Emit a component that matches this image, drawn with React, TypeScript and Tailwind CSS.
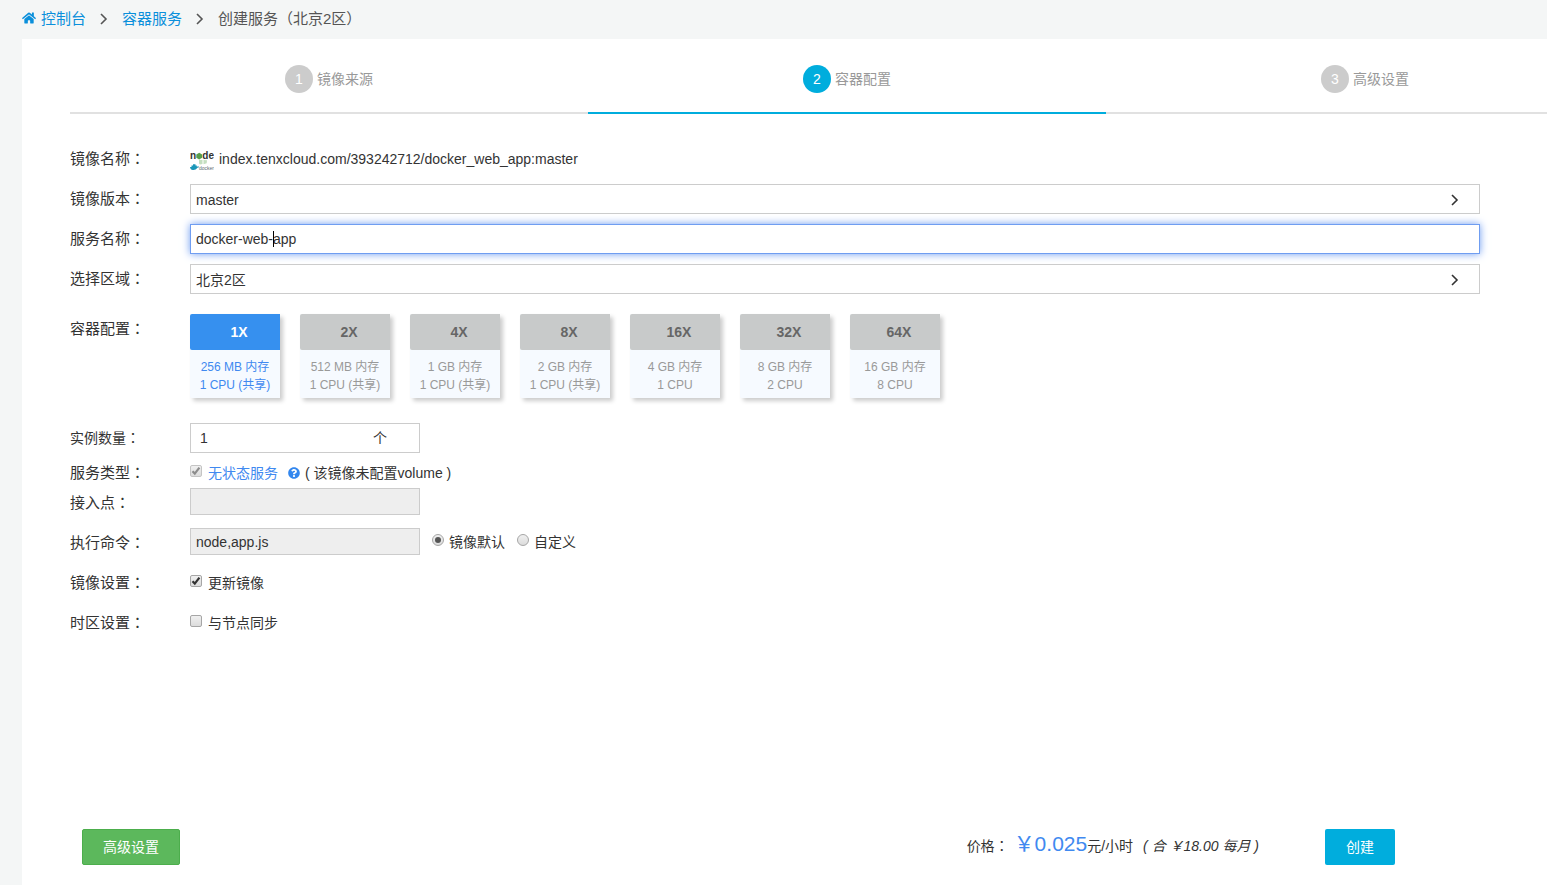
import { useState, type ReactNode } from "react";
import { FaHome, FaQuestionCircle } from "react-icons/fa";
import clsx from "clsx";

interface Plan {
  id: string;
  memory: string;
  cpu: string;
}

const plans: Plan[] = [
  { id: "1X", memory: "256 MB 内存", cpu: "1 CPU (共享)" },
  { id: "2X", memory: "512 MB 内存", cpu: "1 CPU (共享)" },
  { id: "4X", memory: "1 GB 内存", cpu: "1 CPU (共享)" },
  { id: "8X", memory: "2 GB 内存", cpu: "1 CPU (共享)" },
  { id: "16X", memory: "4 GB 内存", cpu: "1 CPU" },
  { id: "32X", memory: "8 GB 内存", cpu: "2 CPU" },
  { id: "64X", memory: "16 GB 内存", cpu: "8 CPU" },
];

const steps = ["镜像来源", "容器配置", "高级设置"];
const currentStep = 1;

function Chevron({ className }: { className?: string }) {
  return (
    <svg
      className={className}
      width="8"
      height="12"
      viewBox="0 0 8 12"
      fill="none"
      stroke="currentColor"
      strokeWidth="1.6"
      aria-hidden="true"
    >
      <path d="M1 1l5 5-5 5" />
    </svg>
  );
}

// Centred full-width colon
function Colon() {
  return <span className="font-['Noto_Sans_CJK_TC',sans-serif]">：</span>;
}

interface RowProps {
  label: string;
  htmlFor?: string;
  className?: string;
  small?: boolean;
  children: ReactNode;
}

function Row({ label, htmlFor, className = "h-10 items-center", small, children }: RowProps) {
  return (
    <div className={clsx("flex", className)}>
      <label
        htmlFor={htmlFor}
        className={clsx(
          "w-[120px] shrink-0 pb-[2px] leading-[28px]",
          small ? "text-sm" : "text-[15px]"
        )}
      >
        {label}
        <Colon />
      </label>
      {children}
    </div>
  );
}

interface SelectBoxProps {
  id: string;
  options: string[];
}

function SelectBox({ id, options }: SelectBoxProps) {
  return (
    <div className="relative flex-1">
      <select
        id={id}
        className="block h-[30px] w-full appearance-none border border-[#ccc] bg-white px-[5px] pt-[2px] text-sm outline-none"
      >
        {options.map((option) => (
          <option key={option}>{option}</option>
        ))}
      </select>
      <Chevron className="pointer-events-none absolute right-[21px] top-[10px]" />
    </div>
  );
}

interface TickProps {
  id: string;
  defaultChecked?: boolean;
  disabled?: boolean;
}

function Tick({ id, defaultChecked, disabled }: TickProps) {
  return (
    <span className="relative mb-1 block size-3">
      <input
        id={id}
        type="checkbox"
        defaultChecked={defaultChecked}
        disabled={disabled}
        className="peer block size-3 appearance-none rounded-[2px] border border-[#a6a6a6] bg-linear-to-b from-[#f0f0f0] to-[#dcdcdc] disabled:border-[#c4c4c4]"
      />
      <svg
        className="pointer-events-none absolute inset-0 hidden text-[#333] peer-checked:block peer-disabled:text-[#8c8c8c]"
        width="12"
        height="12"
        viewBox="0 0 12 12"
        fill="none"
        stroke="currentColor"
        strokeWidth="2.2"
        aria-hidden="true"
      >
        <path d="M2.5 6.2l2.3 2.4 4.6-6" />
      </svg>
    </span>
  );
}

interface RadioProps {
  id: string;
  defaultChecked?: boolean;
}

function Radio({ id, defaultChecked }: RadioProps) {
  return (
    <span className="relative mb-1 block size-3">
      <input
        id={id}
        type="radio"
        name="command-mode"
        defaultChecked={defaultChecked}
        className="peer block size-3 appearance-none rounded-full border border-[#a6a6a6] bg-linear-to-b from-[#f0f0f0] to-[#dcdcdc]"
      />
      <span className="pointer-events-none absolute left-[3px] top-[3px] hidden size-[6px] rounded-full bg-[#555] peer-checked:block" />
    </span>
  );
}

function ImageLogo() {
  return (
    <svg width="24" height="24" viewBox="0 0 24 24" aria-hidden="true">
      <g fontFamily="Liberation Sans, sans-serif">
        <text x="0" y="12" fontSize="10" fontWeight="bold" fill="#333">
          n
        </text>
        <text x="12.300" y="12" fontSize="10" fontWeight="bold" fill="#333">
          de
        </text>
        <text x="9" y="23" fontSize="5" fill="#5b6b73">
          docker
        </text>
      </g>
      <path d="M9.200 5.800l2.900 1.700v3.300l-2.900 1.700-2.900-1.700V7.500z" fill="#5a9e4b" />
      <path d="M9 13h3.500v4l-2.500.5-1-1zM13.500 13l3.500.3-.3 3-3.200.9z" fill="#c4dfc0" />
      <path
        d="M0 20h1.500v-1.400H3v-1.400h2.500v1.400h1.300v1.200c.8-.6 1.700-.4 2.400 0-.4.900-1.200 1-1.900 1-1 1.800-2.700 2.400-4.500 2.200C1 22.800.1 21.600 0 20z"
        fill="#1b96b8"
      />
    </svg>
  );
}

export default function App() {
  const [plan, setPlan] = useState("1X");
  const [serviceName, setServiceName] = useState("docker-web-app");

  return (
    <div className="flex min-h-screen flex-col overflow-x-hidden bg-[#f4f6f6] font-['Liberation_Sans','Noto_Sans_CJK_SC',sans-serif] text-sm text-[#333]">
      <nav className="flex h-[39px] items-center pb-[2px] pl-[22px] text-[15px] text-[#555]">
        <a href="#" className="flex items-center gap-[5px] text-[#0a8fdb]">
          <FaHome className="size-[14px]" />
          控制台
        </a>
        <Chevron className="mx-[14px]" />
        <a href="#" className="text-[#0a8fdb]">
          容器服务
        </a>
        <Chevron className="mx-[14px]" />
        <span>创建服务（北京2区）</span>
      </nav>

      <main className="ml-[22px] flex flex-1 flex-col overflow-hidden bg-white">
        {/* The step bar runs past the right edge of the panel */}
        <ol className="-mr-[77px] ml-12 grid grid-cols-3">
          {steps.map((step, index) => (
            <li
              key={step}
              className={clsx(
                "flex justify-center gap-1 border-b-2 pb-[19px] pt-[26px] leading-7 text-[#999]",
                index === currentStep ? "border-[#00addd]" : "border-[#e1e1e1]"
              )}
            >
              <span
                className={clsx(
                  "size-7 rounded-full text-center text-white",
                  index === currentStep ? "bg-[#00addd]" : "bg-[#ccc]"
                )}
              >
                {index + 1}
              </span>
              {step}
            </li>
          ))}
        </ol>

        <form className="flex flex-1 flex-col" onSubmit={(e) => e.preventDefault()}>
          <div className="pb-10 pl-12 pr-[67px] pt-[25px]">
            <Row label="镜像名称">
              <div className="flex items-center gap-[5px]">
                <ImageLogo />
                index.tenxcloud.com/393242712/docker_web_app:master
              </div>
            </Row>

            <Row label="镜像版本" htmlFor="version">
              <SelectBox id="version" options={["master"]} />
            </Row>

            <Row label="服务名称" htmlFor="service-name">
              <div className="relative flex-1">
                <input
                  id="service-name"
                  type="text"
                  value={serviceName}
                  onChange={(e) => setServiceName(e.target.value)}
                  className="block h-[30px] w-full border border-[#6f9df1] bg-white px-[5px] text-sm shadow-[0_0_8px_#6f9df1] outline-none"
                />
                <span className="pointer-events-none absolute left-[83px] top-[7px] h-4 w-px bg-black" />
              </div>
            </Row>

            <Row label="选择区域" htmlFor="region">
              <SelectBox id="region" options={["北京2区"]} />
            </Row>

            <Row label="容器配置" className="mb-[25px] mt-[15px] items-start">
              <div className="flex flex-wrap gap-5">
                {plans.map(({ id, memory, cpu }) => (
                  <button
                    key={id}
                    type="button"
                    onClick={() => setPlan(id)}
                    className="w-[90px] rounded-l-[2px] bg-[#f6faff] text-center shadow-[3px_3px_4px_#ccc]"
                  >
                    <span
                      className={clsx(
                        "block rounded-l-[2px] pl-2 text-sm font-bold leading-9",
                        plan === id ? "bg-[#3690ef] text-white" : "bg-[#c8caca] text-[#666]"
                      )}
                    >
                      {id}
                    </span>
                    <span
                      className={clsx(
                        "block h-12 pt-2 text-xs leading-[18px]",
                        plan === id ? "text-[#4089f0]" : "text-[#999]"
                      )}
                    >
                      {memory}
                      <br />
                      {cpu}
                    </span>
                  </button>
                ))}
              </div>
            </Row>

            <Row label="实例数量" htmlFor="count" small className="h-[30px] items-center">
              <div className="flex h-[30px] w-[230px] items-center border border-[#ccc]">
                <input
                  id="count"
                  type="text"
                  defaultValue="1"
                  className="w-[182px] pl-[9px] text-sm outline-none"
                />
                <span>个</span>
              </div>
            </Row>

            <Row label="服务类型" className="mt-[5px] h-[30px] items-center">
              <Tick id="stateless" defaultChecked disabled />
              <label htmlFor="stateless" className="ml-[6px] text-[#4089f0]">
                无状态服务
              </label>
              <FaQuestionCircle className="ml-[10px] mr-[5px] size-3 text-[#3387ee]" />
              <span>( 该镜像未配置volume )</span>
            </Row>

            <Row label="接入点" htmlFor="endpoint" className="mb-[5px] h-[30px] items-start">
              <input
                id="endpoint"
                type="text"
                disabled
                className="h-[27px] w-[230px] border border-[#ccc] bg-[#eee] px-[5px] text-sm"
              />
            </Row>

            <Row label="执行命令" htmlFor="command" className="h-10 items-start pt-[5px]">
              <div className="flex h-[27px] items-center">
                <input
                  id="command"
                  type="text"
                  readOnly
                  value="node,app.js"
                  className="mr-3 h-[27px] w-[230px] border border-[#ccc] bg-[#eee] px-[5px] text-sm outline-none"
                />
                <Radio id="command-default" defaultChecked />
                <label htmlFor="command-default" className="ml-[5px] mr-3">
                  镜像默认
                </label>
                <Radio id="command-custom" />
                <label htmlFor="command-custom" className="ml-[5px]">
                  自定义
                </label>
              </div>
            </Row>

            <Row label="镜像设置">
              <Tick id="update-image" defaultChecked />
              <label htmlFor="update-image" className="ml-[6px]">
                更新镜像
              </label>
            </Row>

            <Row label="时区设置">
              <Tick id="sync-timezone" />
              <label htmlFor="sync-timezone" className="ml-[6px]">
                与节点同步
              </label>
            </Row>
          </div>

          <div className="mt-auto flex items-center justify-between pb-5 pl-[60px] pr-[152px]">
            <button
              type="button"
              className="h-9 w-[98px] rounded-[2px] border border-[#4cae4c] bg-[#5cb85c] text-white"
            >
              高级设置
            </button>
            <div className="flex items-center">
              <p className="mr-[66px] pb-1 leading-7">
                价格
                <Colon />
                <span className="ml-[5px] text-[21px] leading-7 text-[#4089f0]">￥0.025</span>
                元/小时
                <em className="ml-[10px]">( 合 ￥18.00 每月 )</em>
              </p>
              <button type="submit" className="h-9 w-[70px] rounded-[2px] bg-[#00addd] text-white">
                创建
              </button>
            </div>
          </div>
        </form>
      </main>
    </div>
  );
}
